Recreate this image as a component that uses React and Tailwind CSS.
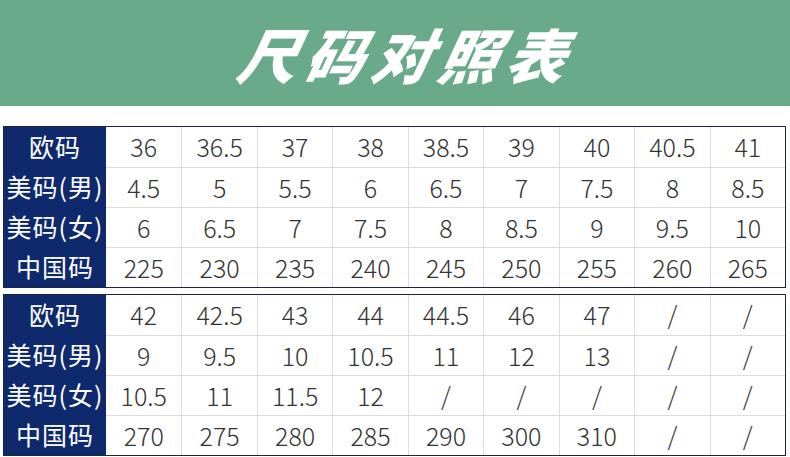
import React from "react";

const font = { fontFamily: '"Noto Sans CJK SC", "Noto Sans", sans-serif' };

const tables = [
  [
    ["欧码", "36", "36.5", "37", "38", "38.5", "39", "40", "40.5", "41"],
    ["美码(男)", "4.5", "5", "5.5", "6", "6.5", "7", "7.5", "8", "8.5"],
    ["美码(女)", "6", "6.5", "7", "7.5", "8", "8.5", "9", "9.5", "10"],
    ["中国码", "225", "230", "235", "240", "245", "250", "255", "260", "265"],
  ],
  [
    ["欧码", "42", "42.5", "43", "44", "44.5", "46", "47", "/", "/"],
    ["美码(男)", "9", "9.5", "10", "10.5", "11", "12", "13", "/", "/"],
    ["美码(女)", "10.5", "11", "11.5", "12", "/", "/", "/", "/", "/"],
    ["中国码", "270", "275", "280", "285", "290", "300", "310", "/", "/"],
  ],
];

function SizeTable({ rows }) {
  return (
    <div className="border border-[#1c2547] grid grid-cols-[102px_repeat(9,1fr)]">
      {rows.map((row, r) =>
        row.map((cell, c) =>
          c === 0 ? (
            <div
              key={r + "-" + c}
              className="h-[40px] bg-[#0e2a6c] text-white text-[25px] flex items-center justify-center tracking-[1px]"
            >
              {cell}
            </div>
          ) : (
            <div
              key={r + "-" + c}
              className={
                "h-[40px] flex items-center justify-center text-[25px] text-[#333] font-light " +
                (c > 1 ? "border-l border-[#dcdcdc] " : "") +
                (r > 0 ? "border-t border-[#dcdcdc]" : "")
              }
            >
              {cell}
            </div>
          )
        )
      )}
    </div>
  );
}

export default function App() {
  return (
    <div className="w-[790px] h-[457px] bg-white overflow-hidden" style={font}>
      <div className="h-[106px] bg-[#69aa8b] flex items-center justify-center pl-[26px]">
        <h1 className="text-white text-[59px] font-black italic leading-none tracking-[8px] -skew-x-12">
          尺码对照表
        </h1>
      </div>
      <div className="mt-[20px] mx-[3px] w-[783px] flex flex-col gap-[6px]">
        {tables.map((rows, i) => (
          <SizeTable key={i} rows={rows} />
        ))}
      </div>
    </div>
  );
}
